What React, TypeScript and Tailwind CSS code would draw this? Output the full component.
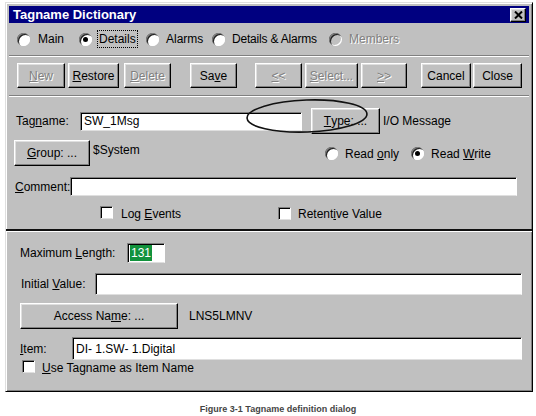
import React from "react";

const raised =
  "bg-[#c0c0c0] border border-t-white border-l-white border-r-black border-b-black shadow-[inset_-1px_-1px_0_#808080,inset_1px_1px_0_#dfdfdf]";
const sunken =
  "bg-white border border-t-[#808080] border-l-[#808080] border-r-white border-b-[#dfdfdf] shadow-[inset_1px_1px_0_#000]";
const dis = "text-[#808080] [text-shadow:1px_1px_0_#fff]";

const Radio = ({ checked = false, disabled = false }: { checked?: boolean; disabled?: boolean }) => (
  <span
    className={`relative inline-block w-[13px] h-[13px] shrink-0 rounded-full ${disabled ? "bg-[#c0c0c0]" : "bg-white"} shadow-[inset_1px_1px_0_#808080,inset_2px_2px_0_#202020,inset_-1px_-1px_0_#fff]`}
  >
    {checked && <span className="absolute left-[4px] top-[4px] w-[5px] h-[5px] rounded-full bg-black" />}
  </span>
);

const Check = () => <span className={`inline-block w-[13px] h-[13px] shrink-0 ${sunken}`} />;

const Btn = ({ w, disabled = false, children }: { w: string; disabled?: boolean; children: React.ReactNode }) => (
  <div className={`flex items-center justify-center h-full ${w} ${raised} ${disabled ? dis : ""}`}>{children}</div>
);

const Groove = () => <div className="h-[2px] border-t border-t-[#808080] border-b border-b-white" />;

export default function App() {
  return (
    <div className="relative w-[536px] h-[416px] overflow-hidden bg-white text-[12px] leading-none text-black font-['Liberation_Sans',Arial,sans-serif]">
      <div className="ml-[5px] mt-[2px] w-[528px] h-[390px] flex flex-col bg-[#c0c0c0] p-[3px] border border-t-[#dfdfdf] border-l-[#dfdfdf] border-r-black border-b-black shadow-[inset_1px_1px_0_#fff,inset_-1px_-1px_0_#808080]">
        {/* title bar */}
        <div className="h-[17px] flex items-center justify-between bg-[#000080] pl-[4px] pr-[3px]">
          <span className="text-white font-bold text-[13px]">Tagname Dictionary</span>
          <span className={`w-[16px] h-[14px] flex items-center justify-center ${raised}`}>
            <svg width="9" height="8" viewBox="0 0 9 8">
              <path d="M1 0.5 L8 7.5 M8 0.5 L1 7.5" stroke="#000" strokeWidth="2" />
            </svg>
          </span>
        </div>

        {/* mode radios */}
        <div className="h-[32px] flex items-center pl-[8px]">
          <div className="w-[62px] flex items-center gap-[8px]"><Radio /><span>Main</span></div>
          <div className="w-[67px] flex items-center gap-[5px]">
            <Radio checked />
            <span className="px-[1px] py-[2px] border border-dotted border-black">Details</span>
          </div>
          <div className="w-[66px] flex items-center gap-[7px]"><Radio /><span>Alarms</span></div>
          <div className="w-[117px] flex items-center gap-[7px]"><Radio /><span className="tracking-[-0.2px]">Details &amp; Alarms</span></div>
          <div className="flex items-center gap-[7px]"><Radio disabled /><span className={dis}>Members</span></div>
        </div>
        <Groove />

        {/* toolbar */}
        <div className="h-[38px] pt-[6px] pb-[7px] pl-[8px] flex">
          <Btn w="w-[48px]" disabled><u>N</u>ew</Btn>
          <div className="w-[3px]" />
          <Btn w="w-[51px]"><u>R</u>estore</Btn>
          <div className="w-[5px]" />
          <Btn w="w-[47px]" disabled><u>D</u>elete</Btn>
          <div className="w-[19px]" />
          <Btn w="w-[47px]">Sa<u>v</u>e</Btn>
          <div className="w-[18px]" />
          <Btn w="w-[47px]" disabled><u>&lt;</u>&lt;</Btn>
          <div className="w-[3px]" />
          <Btn w="w-[53px]" disabled><u>S</u>elect...</Btn>
          <div className="w-[3px]" />
          <Btn w="w-[46px]" disabled><u>&gt;</u>&gt;</Btn>
          <div className="w-[14px]" />
          <Btn w="w-[50px]">Cancel</Btn>
          <div className="w-[2px]" />
          <Btn w="w-[49px]">Close</Btn>
        </div>
        <Groove />

        {/* upper fields */}
        <div className="flex flex-col h-[132px]">
          <div className="mt-[11px] h-[26px] flex items-center">
            <span className="ml-[7px] w-[64px]">Tag<u>n</u>ame:</span>
            <div className={`w-[222px] h-[19px] flex items-center pl-[3px] ${sunken}`}>SW_1Msg</div>
            <div className="w-[9px]" />
            <Btn w="w-[69px]"><u>T</u>ype: ...</Btn>
            <span className="ml-[3px]">I/O Message</span>
          </div>
          <div className="mt-[6px] h-[26px] flex">
            <div className="ml-[5px]"><Btn w="w-[76px]"><u>G</u>roup: ...</Btn></div>
            <span className="ml-[3px] mt-[4px] w-[232px]">$System</span>
            <div className="flex items-center gap-[7px] pt-[1px]">
              <Radio /><span className="mr-[5px]">Read <u>o</u>nly</span>
              <Radio checked /><span>Read <u>W</u>rite</span>
            </div>
          </div>
          <div className="mt-[11px] h-[19px] flex items-center">
            <span className="ml-[6px] w-[55px]"><u>C</u>omment:</span>
            <div className={`w-[447px] h-[19px] ${sunken}`} />
          </div>
          <div className="mt-[11px] h-[13px] flex items-center">
            <span className="ml-[91px]"><Check /></span>
            <span className="ml-[8px] w-[157px]">Log <u>E</u>vents</span>
            <Check />
            <span className="ml-[7px]">Retent<u>i</u>ve Value</span>
          </div>
        </div>

        <div className="h-[3px] border-t-2 border-t-[#101010] border-b border-b-white -mx-[3px]" />

        {/* lower fields */}
        <div className="flex flex-col">
          <div className="mt-[11px] h-[20px] flex items-center">
            <span className="ml-[11px] w-[107px]">Maximum <u>L</u>ength:</span>
            <div className={`w-[38px] h-[20px] flex items-center pl-[2px] ${sunken}`}>
              <span className="bg-[#12923c] text-white px-[1px] py-[2px]">131</span>
            </div>
          </div>
          <div className="mt-[10px] h-[22px] flex items-center">
            <span className="ml-[12px] w-[74px]">Initial <u>V</u>alue:</span>
            <div className={`w-[427px] h-[22px] ${sunken}`} />
          </div>
          <div className="mt-[8px] h-[26px] flex items-center">
            <div className="ml-[11px] h-full"><Btn w="w-[158px]">Access Na<u>m</u>e: ...</Btn></div>
            <span className="ml-[11px]">LNS5LMNV</span>
          </div>
          <div className="mt-[8px] h-[23px] flex items-center">
            <span className="ml-[11px] w-[52px]"><u>I</u>tem:</span>
            <div className={`w-[450px] h-[23px] flex items-center pl-[3px] ${sunken}`}>DI- 1.SW- 1.Digital</div>
          </div>
          <div className="mt-[1px] h-[13px] flex items-center">
            <span className="ml-[13px]"><Check /></span>
            <span className="ml-[7px]"><u>U</u>se Tagname as Item Name</span>
          </div>
        </div>
      </div>

      {/* annotation ellipse */}
      <svg className="absolute left-[245px] top-[97px]" width="126" height="40" viewBox="0 0 126 40">
        <ellipse cx="62" cy="19" rx="60" ry="16" fill="none" stroke="#111" strokeWidth="1.6" transform="rotate(-2 62 19)" />
      </svg>

      <div className="mt-[13px] pl-[20px] text-center text-[9px] leading-[9px] font-bold text-[#444]">
        Figure 3-1 Tagname definition dialog
      </div>
    </div>
  );
}
